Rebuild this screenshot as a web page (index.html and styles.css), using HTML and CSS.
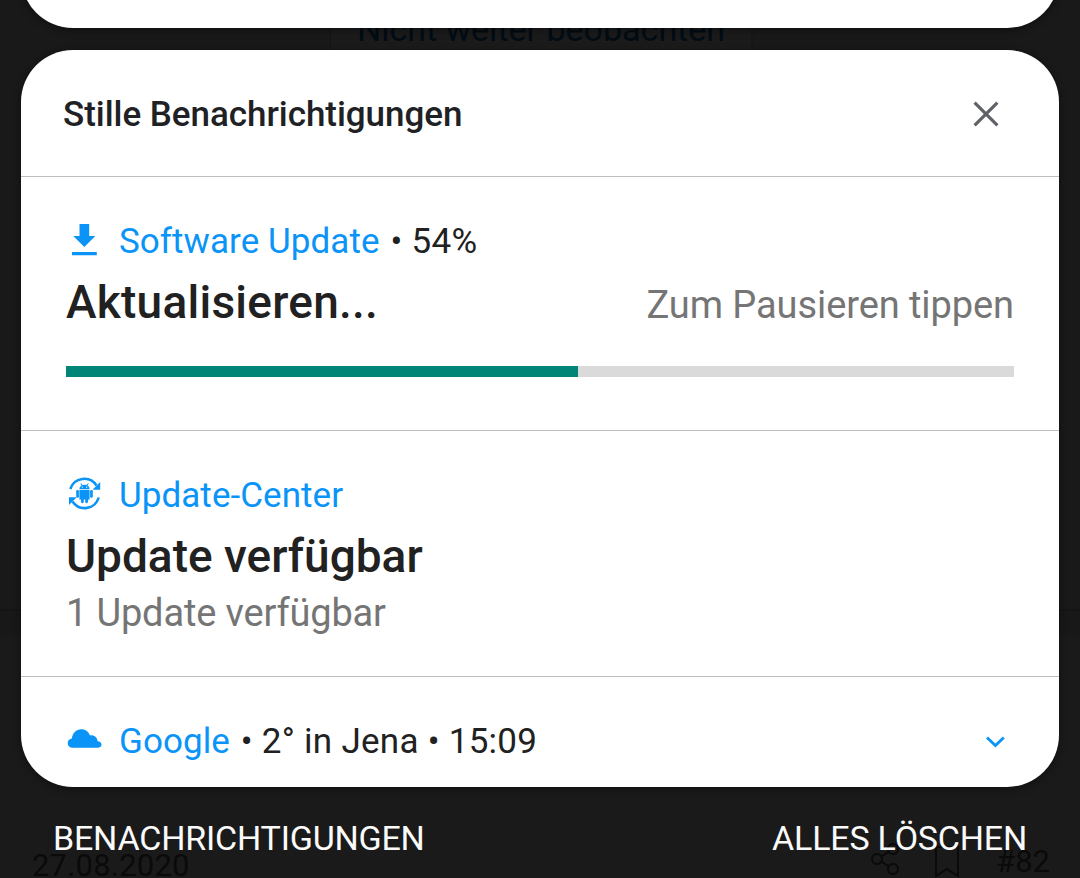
FILE: index.html
```html
<!DOCTYPE html>
<html lang="de">
<head>
  <meta charset="UTF-8">
  <meta name="viewport" content="width=device-width, initial-scale=1.0">
  <title>Benachrichtigungen</title>
  <link rel="stylesheet" href="styles.css">
</head>
<body>
  <!-- Dimmed page behind the shade -->
  <div class="backdrop">
    <div class="backdrop-button">Nicht weiter beobachten</div>
    <div class="backdrop-gap"></div>
    <div class="backdrop-post">
      <span class="post-date">27.08.2020</span>
      <svg class="share-icon" width="30" height="34" viewBox="0 0 30 34">
        <circle cx="6" cy="17" r="5"/>
        <circle cx="22" cy="7" r="5"/>
        <circle cx="22" cy="27" r="5"/>
        <path d="M10 14.5L18 9.5M10 19.5L18 24.5"/>
      </svg>
      <svg class="bookmark-icon" width="24" height="34" viewBox="0 0 24 34">
        <path d="M1 3H23V32L12 25L1 32Z"/>
      </svg>
      <span class="post-number">#82</span>
    </div>
  </div>

  <div class="shade">
    <div class="card card-top"></div>

    <div class="card">
      <div class="card-header">
        <h1>Stille Benachrichtigungen</h1>
        <svg class="close-icon" width="26" height="26" viewBox="0 0 26 26">
          <path d="M1.6 1.6L24.4 24.4M24.4 1.6L1.6 24.4"/>
        </svg>
      </div>

      <div class="notification software">
        <div class="app-row">
          <svg class="app-icon" width="36" height="36" viewBox="0 0 36 36">
            <path d="M13.5 1H23.2V13H29.3L18.3 24L7.3 13H13.5ZM6 29H30.8V32.2H6Z"/>
          </svg>
          <span class="app-name">Software Update</span>
          <span class="info">&nbsp;• 54%</span>
        </div>
        <div class="title-row">
          <h2>Aktualisieren...</h2>
          <span class="text">Zum Pausieren tippen</span>
        </div>
        <div class="progress">
          <div class="progress-bar" style="width: 54%"></div>
        </div>
      </div>

      <div class="notification center">
        <div class="app-row">
          <svg class="app-icon" width="36" height="36" viewBox="0 0 36 36">
            <path class="ring" d="M4.3 12A14.6 14.6 0 0 1 30.5 8.5M32.7 20.5A14.6 14.6 0 0 1 6.5 24.5"/>
            <path d="M34.2 5V12.7H26.5ZM3 28V20.2H10.7Z"/>
            <path d="M13.4 12.2C13.5 10.3 14.2 9.2 15.5 8.4L14.3 6.7L15 6.2L16.5 8Q18.5 7.3 20.5 8L22 6.2L22.7 6.7L21.500 8.4C22.8 9.2 23.5 10.3 23.6 12.2Z"/>
            <path d="M13.4 13H23.6V22.600H22V24.800Q22 26.200 20.600 26.200T19.200 24.800V22.600H17.800V24.800Q17.800 26.200 16.400 26.200T15 24.800V22.600H13.4Z"/>
            <rect x="10.2" y="13" width="2.700" height="7.800" rx="1.2"/>
            <rect x="24.1" y="13" width="2.700" height="7.800" rx="1.2"/>
            <circle class="eye" cx="16.3" cy="10.1" r="0.7"/>
            <circle class="eye" cx="20.7" cy="10.1" r="0.7"/>
          </svg>
          <span class="app-name">Update-Center</span>
        </div>
        <div class="title-row">
          <h2>Update verfügbar</h2>
        </div>
        <p class="text">1 Update verfügbar</p>
      </div>

      <div class="notification google">
        <div class="app-row">
          <svg class="app-icon" width="36" height="36" viewBox="0 0 36 36">
            <path d="M6.5 24.7C3.7 24.7 1.7 22.7 1.7 20.2C1.7 17.7 3.5 15.8 5.9 15.6C6.2 10.3 10.3 6.2 15.3 6.2C19.5 6.2 22.8 8.8 24 12.5C28 11.7 31.3 14.5 31.6 18.3C34 18.4 35.5 19.8 35.5 21.6C35.5 23.4 34.1 24.7 32.3 24.7Z"/>
          </svg>
          <span class="app-name">Google</span>
          <span class="info">&nbsp;• 2° in Jena • 15:09</span>
          <svg class="chevron-icon" width="20" height="14" viewBox="0 0 20 14">
            <path d="M2 3.5L10.4 11.5L18.8 3.5"/>
          </svg>
        </div>
      </div>
    </div>

    <div class="actions">
      <span>BENACHRICHTIGUNGEN</span>
      <span>ALLES LÖSCHEN</span>
    </div>
  </div>
</body>
</html>
```
FILE: styles.css
```css
* {
  box-sizing: border-box;
}

body {
  margin: 0;
  height: 878px;
  position: relative;
  overflow: hidden;
  background: #191919;
  font-family: Roboto, sans-serif;
}

h1, h2, p {
  margin: 0;
  font-weight: 500;
}

svg {
  display: block;
  flex-shrink: 0;
}

/* Backdrop */
.backdrop {
  position: absolute;
  inset: 0;
  display: flex;
  flex-direction: column;
  overflow: hidden;
  color: #0a0a0a;
}

.backdrop-button {
  width: 424px;
  height: 60px;
  margin-left: 329px;
  border: 2px solid #171717;
  border-top: 0;
  background: #1b1b1b;
  color: #020c15;
  font-size: 34px;
  line-height: 59px;
  text-align: center;
}

.backdrop-gap {
  height: 26px;
  margin-top: 549px;
  border-top: 2px solid #151515;
  border-bottom: 1px solid #171717;
  background: #181818;
}

.backdrop-post {
  flex: 1;
  display: flex;
  align-items: flex-end;
  padding: 0 30px 0 32px;
  background: #1a1a1a;
  font-size: 31px;
  line-height: 34px;
}

.post-date {
  margin-right: auto;
  margin-bottom: -5px;
  letter-spacing: 0.2px;
}

.post-number {
  margin-bottom: -1px;
}

.backdrop-post svg {
  fill: none;
  stroke: #0a0a0a;
  stroke-width: 2;
}

.share-icon {
  margin-right: 34px;
  margin-bottom: 2px;
}

.bookmark-icon {
  margin-right: 37px;
}

/* Notification shade */
.shade {
  position: relative;
  display: flex;
  flex-direction: column;
  gap: 22px;
  padding: 0 21px;
}

.card {
  height: 737px;
  border-radius: 52px;
  background: #fff;
  box-shadow: 0 2px 8px rgba(0, 0, 0, 0.4);
}

.card-top {
  height: 128px;
  margin-top: -100px;
}

.card-header {
  display: flex;
  justify-content: space-between;
  align-items: center;
  height: 127px;
  padding: 0 60.5px 0 42px;
  border-bottom: 1px solid #bdbdbd;
}

.card-header h1 {
  padding-top: 4px;
  font-size: 35px;
  line-height: 44px;
  letter-spacing: -0.04px;
  color: #202124;
}

.close-icon {
  margin-top: 1px;
  fill: none;
  stroke: #5f6368;
  stroke-width: 3.2;
}

/* Notifications */
.notification {
  padding: 42px 45px 0;
  border-bottom: 1px solid #bdbdbd;
}

.software {
  height: 254px;
}

.software h2 {
  letter-spacing: 0.25px;
}

.center {
  height: 246px;
}

.google {
  border-bottom: 0;
}

.app-row {
  display: flex;
  align-items: center;
  height: 44px;
  font-size: 35px;
  line-height: 44px;
  color: #212121;
}

.app-row span {
  padding-top: 2px;
}

.app-icon {
  margin-right: 17px;
  fill: #0b94f8;
}

.app-icon .ring {
  fill: none;
  stroke: #0b94f8;
  stroke-width: 2.6;
}

.app-icon .eye {
  fill: #fff;
}

.app-name {
  color: #0b94f8;
  letter-spacing: 0.06px;
}

.info {
  margin-left: 2px;
  letter-spacing: 0.27px;
}

.chevron-icon {
  margin-left: auto;
  margin-right: 9px;
  fill: none;
  stroke: #0b94f8;
  stroke-width: 2.8;
}

.title-row {
  display: flex;
  justify-content: space-between;
  align-items: baseline;
  margin-top: 12px;
  line-height: 54px;
}

.title-row h2 {
  font-size: 46px;
  color: #212121;
}

.text {
  font-size: 38px;
  font-weight: 400;
  letter-spacing: -0.08px;
  color: #757575;
}

p.text {
  margin-top: 7px;
  line-height: 46px;
  letter-spacing: -0.16px;
}

.progress {
  height: 11px;
  margin-top: 34px;
  background: #dadada;
}

.progress-bar {
  height: 100%;
  background: #018577;
}

/* Bottom actions */
.actions {
  display: flex;
  justify-content: space-between;
  padding: 7px 32px 0;
  font-size: 34px;
  line-height: 44px;
  letter-spacing: -0.2px;
  color: #fafafa;
}
```
